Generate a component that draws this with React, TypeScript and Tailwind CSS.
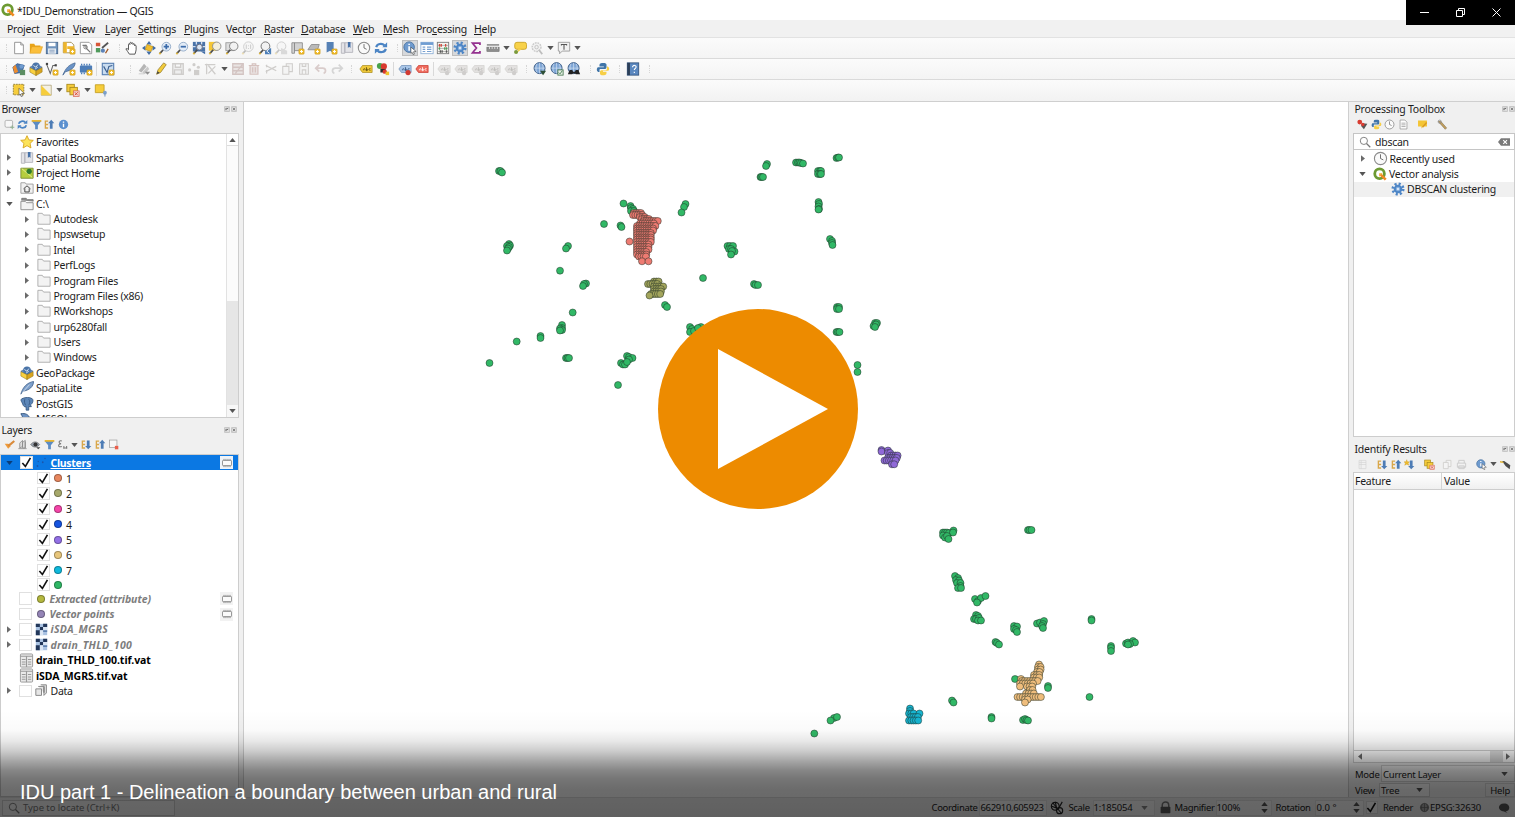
import React from "react";

type Pt = [number, number];

const badge = (
  <g>
    <rect x="9" y="9" width="6" height="6" rx="1" fill="#f0bd2c" stroke="#c9961a" strokeWidth=".6" />
    <path d="M12 10.3v3.4M10.3 12h3.4" stroke="#fff" strokeWidth="1.1" />
  </g>
);
const lens = (
  <g>
    <path d="M2 14.5l4-4.5" stroke="#4d4d4d" strokeWidth="2" />
    <path d="M1.5 15l1.5-1.600" stroke="#e0b63a" strokeWidth="2" />
  </g>
);
const globe = (
  <g>
    <circle cx="7.500" cy="7" r="6.300" fill="#7fa6d6" stroke="#33557f" />
    <path d="M1.500 7h12M7.500 1v12M4.500 2c-1.500 3-1.500 7 0 10M10.500 2c1.500 3 1.500 7 0 10" stroke="#dbe7f5" strokeWidth=".7" fill="none" />
  </g>
);
const gray = "#cfcdcb";
const tag = (fill: string, stroke: string, text: string) => (
  <g>
    <path d="M1 8l3-4h11v8H4z" fill={fill} stroke={stroke} strokeWidth=".8" />
    <path d="M5 9.500c0-2.500 2-2.500 2 0M8.500 6v4M8.500 8.500c2-1 2 1.500 0 1.500M13 7.500c-2-.5-2 2.500 0 2" stroke={text} strokeWidth="1" fill="none" />
  </g>
);

const icons: Record<string, React.ReactNode> = {
  qgis: (
    <g>
      <circle cx="7.500" cy="7.700" r="5.500" fill="none" stroke="#6d9a32" strokeWidth="3.200" />
      <path d="M8.500 8.500l6 6" stroke="#f08a24" strokeWidth="3" />
      <path d="M7 7h4l-4 4z" fill="#f4b13c" />
    </g>
  ),
  file: <path d="M3 1.500h7l3 3v10H3zM10 1.500v3h3" fill="#fff" stroke="#8c8c8c" />,
  open: (
    <g>
      <path d="M1 13V3h5l1 2h6v2" fill="#e8a317" />
      <path d="M3 6.500h12.500L13 14H1z" fill="#fbbf3c" stroke="#dd9b1b" strokeWidth=".6" />
    </g>
  ),
  save: (
    <g>
      <rect x="1.500" y="1.500" width="13" height="13" fill="#6f93bd" stroke="#48688f" />
      <rect x="4" y="2" width="8" height="4" fill="#fff" />
      <rect x="3.500" y="8.500" width="9" height="6" fill="#e9eef4" />
      <path d="M5 10.500h6M5 12.500h6" stroke="#7d98b8" />
    </g>
  ),
  layoutNew: (
    <g>
      <path d="M1.500 1.500h9l3 3v9h-12z" fill="#fff" stroke="#a08a4a" />
      <path d="M1.500 1.500h4v12h-4zM6 6h8v3H6z" fill="#eeb52b" />
      {badge}
    </g>
  ),
  layoutMgr: (
    <g>
      <path d="M1.500 1.500h10l3 3v10h-13z" fill="#fff" stroke="#929292" />
      <path d="M4 5h4v3M13 13L8 8" stroke="#777" strokeWidth="1.400" fill="none" />
      <circle cx="7.500" cy="7" r="2" fill="none" stroke="#777" />
    </g>
  ),
  style: (
    <g>
      <rect x="1" y="2" width="5" height="4" fill="#d8573a" />
      <path d="M8 8l7-6" stroke="#555" strokeWidth="2" />
      <rect x="1" y="8" width="5" height="5" fill="#4f9a5b" />
      <circle cx="9" cy="11" r="2.400" fill="#5d82b8" />
      <path d="M12 14l3-5" stroke="#a05b2a" strokeWidth="1.500" />
    </g>
  ),
  hand: (
    <path d="M5 15c-1-2-3-4-4-6 1-1 2 0 3 1V4c0-1.300 1.500-1.300 1.600 0V2.500c.1-1.300 1.700-1.300 1.800 0V3c.2-1.300 1.800-1.300 1.800 0v1c.2-1.200 1.800-1.200 1.800 0v1.500c.3-1 1.700-1 1.700.3V10c0 2-1 3-1.300 5z" fill="#fff" stroke="#444" strokeWidth="1" />
  ),
  panSel: (
    <g>
      <path d="M8 0l3 4H5zM8 16l3-4H5zM0 8l4-3v6zM16 8l-4-3v6z" fill="#426da5" />
      <rect x="4.500" y="5" width="7" height="6" fill="#f2bf2e" stroke="#b58c17" strokeWidth=".7" transform="rotate(20 8 8)" />
    </g>
  ),
  zoomIn: (
    <g>
      {lens}
      <circle cx="9.500" cy="6.500" r="5" fill="#e3ecf7" stroke="#8fa8c6" />
      <path d="M9.500 3.500v6M6.500 6.500h6" stroke="#3b6baa" strokeWidth="2" />
    </g>
  ),
  zoomOut: (
    <g>
      {lens}
      <circle cx="9.500" cy="6.500" r="5" fill="#e3ecf7" stroke="#8fa8c6" />
      <path d="M6.500 6.500h6" stroke="#3b6baa" strokeWidth="2" />
    </g>
  ),
  zoomFull: (
    <g>
      <rect x="1" y="1" width="14" height="11" fill="#4a73a8" />
      <path d="M5 1v3M11 1v3M1 6.500h3M12 6.500h3" stroke="#d3dff0" strokeWidth="1.500" />
      <path d="M10 12h5v3z" fill="#426da5" />
      {lens}
      <circle cx="8.500" cy="7" r="3.300" fill="#dce7f4" stroke="#667" />
    </g>
  ),
  zoomSel: (
    <g>
      <rect x="1" y="1" width="9" height="10" fill="#f6c734" />
      {lens}
      <circle cx="10" cy="6" r="4.800" fill="#f4efdc" stroke="#888" />
    </g>
  ),
  zoomLayer: (
    <g>
      <rect x="1" y="2" width="9" height="9" fill="#dedede" stroke="#999" />
      {lens}
      <circle cx="10" cy="6" r="4.800" fill="#f2f2f2" stroke="#777" />
    </g>
  ),
  zoomNative: (
    <g opacity=".35">
      {lens}
      <circle cx="8.500" cy="6.500" r="5.500" fill="#f5f5f5" stroke="#777" />
      <path d="M6 4v5M11 4v5M8.500 5v1M8.500 8v1" stroke="#666" />
    </g>
  ),
  zoomLast: (
    <g>
      {lens}
      <circle cx="8.500" cy="6" r="5" fill="#f2f2f2" stroke="#666" />
      <path d="M15 8v7H8l0-3.500z" fill="#4d7fb8" />
      <path d="M13 9l-3 2.500 3 2.500" stroke="#fff" fill="none" />
    </g>
  ),
  zoomNext: (
    <g opacity=".3">
      {lens}
      <circle cx="8.500" cy="6" r="5" fill="#f2f2f2" stroke="#666" />
      <path d="M8 8v7h7V11z" fill="#999" />
    </g>
  ),
  mapNew: (
    <g>
      <path d="M1 2h3v12H1zM4 2h9v9H4z" fill="#d2d2d2" stroke="#8c8c8c" />
      {badge}
    </g>
  ),
  map3d: (
    <g>
      <path d="M1 10l4-6h9l-2 6z" fill="#b9b9b9" stroke="#8d8d8d" />
      {badge}
    </g>
  ),
  bmNew: (
    <g>
      <path d="M3 1h8v13l-4-3-4 2z" fill="#5681b5" />
      {badge}
    </g>
  ),
  bm: (
    <g>
      <path d="M1.500 2h4v12h-4zM5.500 2h9v11h-9z" fill="#e4e4e8" stroke="#b3b3ba" />
      <path d="M9 1h3v7l-1.500-1.500L9 8z" fill="#4671a8" />
    </g>
  ),
  clock: (
    <g>
      <circle cx="8" cy="8" r="6.500" fill="#fafafa" stroke="#8a8a8a" strokeWidth="1.200" />
      <path d="M8 3.500V8l3 1.500" stroke="#666" fill="none" />
    </g>
  ),
  refresh: (
    <g fill="none" stroke="#4b84c4" strokeWidth="2.500">
      <path d="M2.500 7C3.500 3 9 2 12 5M13.500 9c-1 4-6.500 5-9.500 2" />
      <path d="M15 1.500V7H9.500zM1 14.500V9h5.500z" fill="#4b84c4" stroke="none" />
    </g>
  ),
  identify: (
    <g>
      <circle cx="7" cy="7" r="6" fill="#6f9bcf" stroke="#436f9f" />
      <path d="M7 3v1.500M7 6v5" stroke="#fff" strokeWidth="1.800" />
      <path d="M9 7l6 5-3 .3 1 2.700-1.500.5-1-2.500L9 14z" fill="#fff" stroke="#444" strokeWidth=".7" />
    </g>
  ),
  table: (
    <g>
      <rect x="1" y="1.500" width="14" height="13" fill="#fff" stroke="#8fb0d6" />
      <path d="M1 1.500h14v3H1z" fill="#6f9dd2" />
      <path d="M3 7h3M8 7h5M3 9.500h3M8 9.500h5M3 12h3M8 12h5" stroke="#78a0d0" strokeWidth="1.300" />
    </g>
  ),
  abacus: (
    <g>
      <rect x="1.500" y="1.500" width="13" height="13" fill="#f5f5f0" stroke="#777" />
      <path d="M1.500 5h13M1.500 8.500h13M1.500 12h13" stroke="#999" strokeWidth=".8" />
      <path d="M4 3.500v3M6 3.500v3M11 3.500v3" stroke="#d2493c" strokeWidth="1.500" />
      <path d="M4 7v3M10 7v3M12 7v3" stroke="#4d9a58" strokeWidth="1.500" />
      <path d="M5 10.500v3M7 10.500v3M12 10.500v3" stroke="#555" strokeWidth="1.500" />
    </g>
  ),
  gear: (
    <g>
      <circle cx="8" cy="8" r="6" fill="none" stroke="#4e86c6" strokeWidth="3" strokeDasharray="2.400 2.312" />
      <circle cx="8" cy="8" r="3.700" fill="#8bb3e0" stroke="#4e86c6" strokeWidth="2.400" />
      <circle cx="8" cy="8" r="1.200" fill="#e9f1fa" />
    </g>
  ),
  sigma: <path d="M12.500 4.500V2.500H4L8.500 8 4 13.500h8.500v-2" fill="none" stroke="#94318f" strokeWidth="2" />,
  ruler: (
    <g>
      <path d="M1 4.500h14" stroke="#555" strokeWidth="1.200" />
      <rect x="1" y="7" width="14" height="5" fill="#8d8d8d" stroke="#666" strokeWidth=".6" />
      <path d="M4 7v2M7 7v2M10 7v2M13 7v2" stroke="#eee" />
    </g>
  ),
  tip: (
    <g>
      <rect x="2" y="1.500" width="13.500" height="8" rx="2.500" fill="#f8d24a" stroke="#c9a224" />
      <path d="M6 9l-1 4 5-4z" fill="#f8d24a" />
      <circle cx="3.500" cy="12.500" r="2.300" fill="#7b9a3a" />
    </g>
  ),
  locGray: (
    <g opacity=".5">
      <circle cx="7.500" cy="7" r="5" fill="#ececec" stroke="#9a9a9a" strokeDasharray="2 1" strokeWidth="1.600" />
      <circle cx="7.500" cy="7" r="2" fill="none" stroke="#888" />
      <path d="M10 10l4 5" stroke="#888" strokeWidth="2" />
    </g>
  ),
  textAnn: (
    <g>
      <path d="M1.500 1.500h13v10H6l-3 3v-3H1.500z" fill="#f2f2f2" stroke="#999" />
      <path d="M5 5V4h6v1M8 4v6" stroke="#555" strokeWidth="1.200" fill="none" />
    </g>
  ),
  dsm: (
    <g>
      <path d="M1 6l5-4 8 2-3 8-8 1z" fill="#4f79ae" stroke="#35588a" />
      <path d="M1 6l3-3 3 8-4 2z" fill="#ec8b2d" />
      <circle cx="11" cy="5" r="2.500" fill="#6f9bcf" />
      <rect x="9" y="9" width="6" height="6" fill="#5b8d62" />
    </g>
  ),
  gpkg: (
    <g>
      <path d="M1 6l7-4 7 4-7 4z" fill="#6c95c9" stroke="#3f5f87" strokeWidth=".7" />
      <circle cx="8" cy="5" r="4.300" fill="#4a74a8" />
      <path d="M5 4l3 2 2-3M7 8l3-2" stroke="#dfeaf7" fill="none" />
      <path d="M1 6.500l7 3.500v5.500l-7-4z" fill="#f9d03f" stroke="#8d7316" strokeWidth=".6" />
      <path d="M15 6.500L8 10v5.500l7-4z" fill="#d9a51f" stroke="#8d7316" strokeWidth=".6" />
    </g>
  ),
  vNew: (
    <g>
      <path d="M2 3l4 10 3-9h3" fill="none" stroke="#666" strokeWidth="1.200" />
      <rect x="1" y="1" width="2.500" height="2.500" fill="#444" />
      <rect x="11" y="2.500" width="2.500" height="2.500" fill="#444" />
      {badge}
    </g>
  ),
  featherNew: (
    <g>
      <path d="M1 15C4 7 8 3 15 1c0 5-5 9-11 10z" fill="#6a93c6" stroke="#3c5f8c" strokeWidth=".8" />
      {badge}
    </g>
  ),
  feather: (
    <g>
      <path d="M1 15C3 7 8 2 15.500 .5c0 6-5 10-11.500 11z" fill="#7d9fca" stroke="#3f5e88" strokeWidth=".9" />
      <path d="M2 14L11 4" stroke="#e4ecf6" strokeWidth=".8" />
    </g>
  ),
  memNew: (
    <g>
      <rect x="1" y="4" width="14" height="8" rx="1" fill="#4d7db8" />
      <path d="M3 2v2M6 2v2M9 2v2M12 2v2M3 12v2M6 12v2" stroke="#4d7db8" strokeWidth="1.500" />
      {badge}
    </g>
  ),
  virt: (
    <g>
      <rect x="1.500" y="1.500" width="13" height="13" fill="#c9dcf0" stroke="#5a82b4" strokeWidth="1.300" />
      <path d="M3 5l4 7 2-7 4-1" fill="none" stroke="#3b5f90" strokeWidth="1.300" />
      {badge}
    </g>
  ),
  editsGray: (
    <g>
      <path d="M2 10l6-8 3 3-6 7z" fill="#b5b5b5" />
      <path d="M6 12l6-7 2 3-5 6z" fill="#c9c9c9" />
      <path d="M2 13.500h6" stroke="#c9c9c9" />
      <path d="M9 11h6l-3 3.500z" fill="#8e8e8e" />
    </g>
  ),
  pencil: (
    <g>
      <path d="M3 14l1.500-5L11 1l3 2-6.500 9z" fill="#f2cb3c" stroke="#8f7522" strokeWidth=".8" />
      <path d="M3 14l1-3.500 2.500 1.700z" fill="#444" />
    </g>
  ),
  saveGray: <path d="M2 2h12v12H2zM5 2v4h6V2M4 14V9h8v5" fill="#eee" stroke={gray} strokeWidth="1.500" />,
  ptsGray: (
    <g fill={gray}>
      <circle cx="3" cy="9" r="1.800" /><circle cx="8" cy="3" r="1.800" /><circle cx="13" cy="6" r="1.800" />
      <rect x="8" y="9" width="6" height="6" />
    </g>
  ),
  vertGray: <path d="M1 3h12M3 2v12M5 4l8 10M13 5l-8 8" fill="none" stroke={gray} strokeWidth="1.500" />,
  multiGray: <path d="M2 2h12v12H2zM2 6h12M2 10h12M5 13L13 3" fill="#e9e4e3" stroke="#d3c4c2" strokeWidth="1.500" />,
  trash: <path d="M2 4h12M6 4V2h4v2M3.500 4v10h9V4M6.500 6v6M9.500 6v6" fill="#e9e2e1" stroke="#d6c2bf" strokeWidth="1.400" />,
  cut: <path d="M2 4l12 6M2 11l12-6M3 3v3M3 9v4" fill="none" stroke={gray} strokeWidth="1.400" />,
  copy: <path d="M2 5h7v9H2zM6 5V2h7v9H9" fill="#f4f4f4" stroke={gray} strokeWidth="1.200" />,
  paste: <path d="M3 2h10v12H3zM6 2v3h4V2M6 9h4v5H6z" fill="#f4f4f4" stroke={gray} strokeWidth="1.200" />,
  undo: <path d="M6 3L2 7l4 4M2 7h8c4 0 4 5 1 6" fill="none" stroke="#d9cccb" strokeWidth="2" />,
  redo: <path d="M10 3l4 4-4 4M14 7H6c-4 0-4 5-1 6" fill="none" stroke="#d5d5d5" strokeWidth="2" />,
  abc: tag("#f0c93a", "#a88a1c", "#5c4a08"),
  diag: (
    <g>
      <path d="M6 6l7 7" stroke="#333" strokeWidth="1.500" />
      <circle cx="4.500" cy="4.500" r="3.500" fill="#4aa24b" />
      <circle cx="9" cy="5" r="3.500" fill="#d8392f" />
      <rect x="5" y="8" width="6" height="4" fill="#2d2d2d" />
      <circle cx="10" cy="11" r="2.500" fill="#d8392f" />
      <rect x="11" y="11" width="4" height="4" fill="#f0c22e" />
    </g>
  ),
  abcBlue: (
    <g>
      {tag("#a9c6e8", "#6c8cb4", "#30507c")}
      <circle cx="11.500" cy="12" r="3" fill="#d23b33" />
    </g>
  ),
  abcRed: tag("#ef6a5c", "#c5372c", "#fff"),
  tagGray: (
    <g opacity=".75">
      {tag("#dcdad8", "#c6c4c2", "#a8a6a4")}
      <circle cx="11.500" cy="12.500" r="2.500" fill="#c2c0be" />
    </g>
  ),
  globeA: (<g>{globe}<path d="M8 10h7l-3.500 5z" fill="#2e4f36" /></g>),
  globeB: (<g>{globe}<rect x="9" y="9" width="6" height="6" fill="#e8efe8" stroke="#4a7a52" /><path d="M10 12l1.500 1.500L14 10" stroke="#3c7a46" fill="none" /></g>),
  globeC: (<g>{globe}<path d="M1 14l2-5h3l1 2h2l1-2h3l2 5h-5l-.5-1h-3L6 14z" fill="#222" /></g>),
  python: (
    <g>
      <path d="M8 1c-4 0-4 1-4 4h5v1H2C0 8 1 12 4 11.500V9c0-1 1-1 2-1h4c1 0 2-.5 2-2V3c0-1.500-1-2-4-2z" fill="#3f74a8" />
      <path d="M8 15c4 0 4-1 4-4H8v-1h6c2-2 1-5-1.500-5v2c0 2-1 2.500-2.500 2.500H7c-1.500 0-2.500.5-2.500 2V13c0 1.500 1 2 3.500 2z" fill="#f7cf45" />
    </g>
  ),
  help: (
    <g>
      <rect x="1.500" y="1" width="13" height="14" fill="#5a87bf" stroke="#35557f" />
      <rect x="1.500" y="1" width="3" height="14" fill="#2c3e57" />
      <path d="M7.500 6c0-3 4.500-2.500 4 0-.3 1.500-2 1.300-2 3M9.500 11v1.500" stroke="#fff" fill="none" strokeWidth="1.300" />
    </g>
  ),
  selRect: (
    <g>
      <rect x="1.500" y="1.500" width="12" height="12" fill="#f6cd3c" stroke="#8c7a3a" strokeDasharray="2 1" />
      <path d="M8 6l6 6-3 0 1 3-1.500.5-1-3L8 14z" fill="#fff" stroke="#444" strokeWidth=".7" />
    </g>
  ),
  selExpr: (
    <g>
      <path d="M2.500 2.500h11.500v11.500h-11.500z" fill="#f4f1e6" stroke="#a89b6c" strokeWidth=".8" />
      <path d="M2.500 2.500l11.500 11.500h-11.500z" fill="#f6cd3c" />
    </g>
  ),
  desel: (
    <g>
      <rect x="1" y="1.500" width="8.500" height="8.500" fill="#f6cd3c" stroke="#a98a1e" />
      <rect x="4.500" y="5" width="8.500" height="8.500" fill="#f6cd3c" stroke="#a98a1e" />
      <rect x="8.500" y="9" width="6.500" height="6.500" fill="#f4d6d1" stroke="#d9624f" strokeWidth=".8" />
      <path d="M10 10.500l3.500 3.500M13.500 10.500L10 14" stroke="#d9432f" />
    </g>
  ),
  selLoc: (
    <g>
      <path d="M1.500 2h10v9h-10z" fill="#f6cd3c" stroke="#c59f22" />
      <circle cx="12.500" cy="11" r="2.200" fill="#7ea2cd" />
      <path d="M12.500 12v3.500" stroke="#5c84b5" />
    </g>
  ),
  addLayer: (<g><rect x="1.500" y="2" width="11" height="10" rx="2" fill="#f7f7f7" stroke="#999" /><path d="M12 9v6M9 12h6" stroke="#8fae8f" strokeWidth="1.500" /></g>),
  filter: (<g><path d="M1 3h14l-5 6v6H6V9z" fill="#5b8bc4" /><path d="M1 1.500h14v2.500H1z" fill="#eab52d" /></g>),
  collapse: (<g><path d="M2 2v12M2 3h4M2 8h4M2 13h4" stroke="#d9a74a" strokeWidth="2" fill="none" /><path d="M10.500 1l4.500 5h-2.500v8h-4V6H6z" fill="#4d7cb5" /></g>),
  expand: (<g><path d="M2 2v12M2 3h4M2 8h4M2 13h4" stroke="#d9a74a" strokeWidth="2" fill="none" /><path d="M10.500 15L15 10h-2.500V2h-4v8H6z" fill="#4d7cb5" /></g>),
  expandNew: (<g><path d="M4 1l1 3 3 0-2 2 1 3-3-1.500L1 9l1-3-2-2h3z" fill="#f1bd2c" stroke="#c79517" strokeWidth=".5" /><path d="M10.500 15L15 10h-2.500V2h-4v8H6z" fill="#4d7cb5" /></g>),
  info: (<g><circle cx="8" cy="8" r="6.800" fill="#5b90cf" /><path d="M8 3.500v2M8 7v5" stroke="#fff" strokeWidth="2" /></g>),
  brush: (<g><path d="M1 7l5 0 4 3-4 4z" fill="#ef9b3a" /><path d="M6 10l4-3 5-4" stroke="#d98a3a" strokeWidth="3" /></g>),
  group: <path d="M4 13V6l4-4v9zM8 13V5l4-3v11zM2 14h12M12 4v9" fill="#ddd" stroke="#8b8b8b" strokeWidth="1.200" />,
  eye: (<g><path d="M1 8c4-5 9-5 13 0-4 5-9 5-13 0z" fill="#9aa4b0" stroke="#666" /><circle cx="8" cy="8" r="3" fill="#333" /><path d="M9 12h6l-3 3z" fill="#444" /></g>),
  eps: <path d="M7 3C2 1 2 7 6 7 1 7 1 13 7 11M10 10v4M14 10v4M9 13h6" fill="none" stroke="#777" strokeWidth="1.500" />,
  remove: (<g><rect x="2" y="1.500" width="11" height="11" fill="#f7f7f7" stroke="#999" /><rect x="10" y="10" width="5" height="5" fill="#ea5f4c" /></g>),
  star: <path d="M8 .8l2.200 4.800 5 .5-3.700 3.500 1 5.200L8 12.200l-4.500 2.600 1-5.200L.8 6.100l5-.5z" fill="#fce35a" stroke="#d7a21c" />,
  projHome: (<g><path d="M1 2.500h14v11.500H1z" fill="#b6ce3e" stroke="#7a8d33" /><path d="M2 3l12 10" stroke="#e6f0a0" /><circle cx="10.500" cy="6" r="3" fill="#2c7a2e" /></g>),
  home: (<g><path d="M1 2h5l1 1.500h8V14H1z" fill="#f1f1f1" stroke="#999" /><path d="M4 9l4-3.500L12 9M5.500 8.500V12.500h5V8.500" fill="none" stroke="#444" strokeWidth="1.100" /></g>),
  drive: (<g><path d="M2 4V1.500h5L8.500 3H15v2" fill="#8a8a8a" stroke="#777" /><path d="M1 5h5l1.500 1.500H15V14.500H1z" fill="#f3f3f3" stroke="#888" /></g>),
  folder: <path d="M1 1.500h5l1.500 2H15V14H1z" fill="#f3f3f3" stroke="#a0a0a0" strokeWidth=".9" />,
  pg: (
    <g>
      <path d="M2 2c4-2 9-2 12 0 2 2 0 6-2 7l1 2-3 0v4H7v-4c-1 1-3 0-4-3S0 4 2 2z" fill="#5c86b8" stroke="#2f5078" strokeWidth=".9" />
      <path d="M5.500 2.500c-1 3 0 5 1 7M10 2.500c2 2 1 5 0 7" stroke="#2f5078" strokeWidth=".8" fill="none" />
    </g>
  ),
  mssql: <path d="M1 2c5-1 9 1 10 5l3 8H3c2-4 1-8-2-13z" fill="#6d93c4" stroke="#2f5078" />,
  pts: (<g fill="#1c56ac"><circle cx="2" cy="12" r="1.200" /><circle cx="3" cy="6" r="1" /><circle cx="9" cy="7" r="1.200" /><circle cx="12" cy="2" r="1" /></g>),
  mem: (<g><rect x="2" y="4.500" width="12" height="7" rx="1" fill="#fafafa" stroke="#777" /><path d="M4 2.500v2M6.600 2.500v2M9.300 2.500v2M12 2.500v2M4 11.500v2M6.600 11.500v2M9.300 11.500v2M12 11.500v2" stroke="#777" /></g>),
  raster: (<g><rect x="1" y="1" width="14" height="14" fill="#a9c2e2" /><path d="M1 1h5v4H1zM6 5h4v4H6zM10 1h5v4h-5zM1 9h5v6H1z" fill="#22375a" /><path d="M6 9h4v6H6zM10 5h5v4h-5z" fill="#dbe6f4" /><path d="M10 9h5v2h-5z" fill="#5a7dad" /></g>),
  tbl: (<g><rect x="1.500" y="1" width="13" height="14" rx="1" fill="#e9e9e9" stroke="#999" /><path d="M1.500 3.500h13M8 4v11" stroke="#999" strokeWidth="1.200" /><path d="M3 7h4M9.500 7H13M3 9.500h4M9.500 9.500H13M3 12h4M9.500 12H13" stroke="#999" strokeWidth="1.100" /></g>),
  dataGrp: <path d="M1 6h7v8H1zM4 3h7v8M7 1h7v10l-3 3V4M11 2v8" fill="#e6e6e6" stroke="#888" strokeWidth="1.200" />,
  search: (<g fill="none" stroke="#777"><circle cx="6.500" cy="6.500" r="4.800" strokeWidth="1.200" /><path d="M10 10l5 5" strokeWidth="1.700" /></g>),
  clear: (<g><path d="M0 8l4-5h12v10H4z" fill="#7a7a7a" /><path d="M7 5.500l5 5M12 5.500l-5 5" stroke="#fff" strokeWidth="1.500" /></g>),
  model: (<g><path d="M7 6l8 1-5 8-4-5z" fill="#555" /><circle cx="4" cy="4.500" r="3.500" fill="#d83c31" /><circle cx="8.500" cy="8" r="2.500" fill="#d83c31" /></g>),
  doc: <path d="M3 1.500h7l3 3v10H3zM5 6h6M5 8.500h6M5 11h6" fill="#fff" stroke="#8c8c8c" />,
  editTool: (<g><path d="M1.500 2h13v9h-6l-2 3v-3h-5z" fill="#f4c535" /><path d="M8 12l6-7" stroke="#d99b23" strokeWidth="2" /></g>),
  wrench: (<g><path d="M2 3l4 1 8 9-2 2-8-9z" fill="#c3a05c" stroke="#7b684a" strokeWidth=".8" /><circle cx="4" cy="4" r="2.400" fill="none" stroke="#888" /></g>),
  wrenchDk: (<g><path d="M3 3l3 0 9 6-1 6-6-5z" fill="#4b4b4b" /><path d="M0 4l5 1" stroke="#e3b431" strokeWidth="2" /></g>),
  tipGray: <path d="M3 2h10v12H3zM3 5h10M3 8h10M6 2v12" fill="#f1f1f1" stroke="#d5d5d5" />,
  print: <path d="M2 6h12v6H2zM4 6V2h8v4M4 10h8v4H4z" fill="#f1f1f1" stroke="#c9c9c9" strokeWidth="1.300" />,
  lock: (<g><path d="M4 8V5c0-5 8-5 8 0v3" fill="none" stroke="#777" strokeWidth="1.800" /><rect x="2" y="7" width="12" height="8" rx="1" fill="#5a5a5a" /></g>),
  extents: (<g fill="none" stroke="#222" strokeWidth="1.300"><circle cx="6" cy="6" r="4.500" /><circle cx="11" cy="11" r="3.500" /><path d="M3 2l10 12M6 1l2 9M14 1l-5 9M2 6l8 3" /></g>),
  bubble: <path d="M8 2c9 0 9 10 2 10.500L13 15l-5-2.500C-1 12-1 2 8 2z" fill="#555" />,
  globeGray: (<g fill="none" stroke="#666"><circle cx="8" cy="8" r="6" fill="#aaa" /><path d="M2 8h12M8 2v12M5 3c-2 3-2 7 0 10M11 3c2 3 2 7 0 10" /></g>),
};

const I = ({ n, c = "size-[14px]" }: { n: string; c?: string }) => (
  <svg viewBox="0 0 16 16" className={`${c} shrink-0`}>{icons[n]}</svg>
);

const Down = ({ c = "text-[#555]" }: { c?: string }) => (
  <svg viewBox="0 0 8 5" className={`h-[4px] w-[7px] shrink-0 ${c}`}><path d="M0 0h8L4 5z" fill="currentColor" /></svg>
);
const Right = () => (
  <svg viewBox="0 0 5 8" className="h-[7px] w-[4px] shrink-0 text-[#6a6a6a]"><path d="M0 0v8l5-4z" fill="currentColor" /></svg>
);

/* "v" draws a drop-down arrow, "|" a separator, ":" a drag handle, "*" marks a pressed button. */
const Group = ({ items, c, cell = "w-[16.6px]", size }: { items: string; c: string; cell?: string; size?: string }) => (
  <div className={`flex h-full shrink-0 items-center ${c}`}>
    {items.split(" ").map((n, i) => {
      if (n === "v") return <span key={i} className="flex w-[10.500px] justify-center"><Down /></span>;
      if (n === "|") return <span key={i} className="mx-[2.500px] h-[14px] w-px bg-[#d9d9d9]" />;
      if (n === ":") return <span key={i} className="h-[8px] w-[2px] border-l border-dotted border-[#d6d6d6]" />;
      const on = n.endsWith("*");
      return (
        <span key={i} className={`flex h-[16px] shrink-0 items-center justify-center ${cell} ${on ? "border border-[#bdbdbd] bg-[#d6d8db]" : ""}`}>
          <I n={on ? n.slice(0, -1) : n} c={size} />
        </span>
      );
    })}
  </div>
);

const menus: [string, string, string, string][] = [
  ["Pro", "j", "ect", "w-[40px]"], ["", "E", "dit", "w-[26px]"], ["", "V", "iew", "w-[32px]"], ["", "L", "ayer", "w-[33px]"],
  ["", "S", "ettings", "w-[46px]"], ["", "P", "lugins", "w-[42px]"], ["Vect", "o", "r", "w-[38px]"], ["", "R", "aster", "w-[37px]"],
  ["", "D", "atabase", "w-[52px]"], ["", "W", "eb", "w-[30px]"], ["", "M", "esh", "w-[33px]"], ["Pro", "c", "essing", "w-[58px]"], ["", "H", "elp", "w-[30px]"],
];

const browser: [number, string, string, string][] = [
  [0, "", "star", "Favorites"], [0, "r", "bm", "Spatial Bookmarks"], [0, "r", "projHome", "Project Home"], [0, "r", "home", "Home"],
  [0, "d", "drive", "C:\\"], [1, "r", "folder", "Autodesk"], [1, "r", "folder", "hpswsetup"], [1, "r", "folder", "Intel"],
  [1, "r", "folder", "PerfLogs"], [1, "r", "folder", "Program Files"], [1, "r", "folder", "Program Files (x86)"],
  [1, "r", "folder", "RWorkshops"], [1, "r", "folder", "urp6280fall"], [1, "r", "folder", "Users"], [1, "r", "folder", "Windows"],
  [0, "", "gpkg", "GeoPackage"], [0, "", "feather", "SpatiaLite"], [0, "", "pg", "PostGIS"], [0, "", "mssql", "MSSQL"],
];

const classes: [string, string][] = [
  ["1", "bg-[#e8875f]"], ["2", "bg-[#a6a86a]"], ["3", "bg-[#f545a9]"], ["4", "bg-[#1553e0]"],
  ["5", "bg-[#9370e6]"], ["6", "bg-[#e8c67c]"], ["7", "bg-[#0fb9dc]"], ["", "bg-[#2fb765]"],
];

const Check = ({ on }: { on?: boolean }) => (
  <span className="flex size-[12.500px] shrink-0 items-center justify-center border border-[#e0e0e0] bg-white">
    {on && <svg viewBox="0 0 12 12" className="size-[11px] shrink-0"><path d="M1.500 6.500L4.800 10.300 10.300 1" fill="none" stroke="#111" strokeWidth="1.800" /></svg>}
  </span>
);
const Dot = ({ c }: { c: string }) => <span className={`size-[8px] shrink-0 rounded-full border border-black/30 ${c}`} />;

const DockTitle = ({ t, c = "" }: { t: string; c?: string }) => (
  <div className={`flex h-[15px] items-center justify-between pl-[1.500px] ${c}`}>
    <span>{t}</span>
    <span className="flex gap-px pb-[2px]">
      {[0, 1].map((k) => (
        <svg key={k} viewBox="0 0 10 10" className="size-[6px]">
          <rect x=".5" y=".5" width="9" height="9" rx="2" fill="#ddd" stroke="#aaa" />
          <path d={k ? "M3 3l4 4M7 3l-4 4" : "M3 7V4h4M4 6l3-3"} stroke="#666" strokeWidth="1.200" fill="none" />
        </svg>
      ))}
    </span>
  </div>
);

/* Points of the DBSCAN result, in canvas coordinates of the map view. */
const green: Pt[] = [
  [499, 171], [500.5, 171], [502, 172.5], [767, 164], [766, 166], [760.5, 177], [761.5, 177], [763, 177], [796, 162.500], [798, 162.500], [799.5, 162.5], [801, 163], [803, 163.5],
  [836.5, 158], [838, 157.5], [839, 157.500], [818, 171], [820, 171], [821, 171], [818, 174], [820, 174], [821, 174], [623.500, 203.500], [630.5, 206], [631, 208], [633, 209], [631, 211], [634, 211],
  [604, 224], [620.5, 225.5], [621.5, 227], [685.5, 204], [684, 207], [681.500, 212.500], [818.5, 202], [819, 204], [818.5, 206.5], [819, 209], [818.5, 209.5],
  [509, 244], [510, 245.5], [507, 246], [509, 247], [508, 248.5], [507, 250.5], [568, 246], [566, 248.500], [560, 270.700], [586, 283.5], [584, 284], [583, 286], [572.700, 312.500],
  [830, 239], [832, 241], [832, 243], [832.5, 245], [727.5, 246], [730, 246], [733, 246], [729, 249], [731, 249], [734.5, 251.5], [732, 251], [731, 254.5],
  [703, 278], [754, 284], [755.5, 285], [758, 285], [665, 305], [667, 307], [837, 307], [839, 307], [837, 309], [839, 309], [836.5, 332], [838, 332], [839.5, 332],
  [875, 323], [877, 323], [873.5, 326], [876, 324.5], [875, 327], [562, 325], [562, 328], [560, 328.5], [562, 330], [560, 330.5], [540.500, 336], [540.500, 338],
  [516.700, 341.500], [489.500, 363], [566, 358], [567.5, 358], [569, 358], [627, 356], [629, 357], [632.5, 358], [629, 359.5], [621, 363], [623, 364.5], [625, 364.5], [627, 362],
  [618, 385], [690, 327], [692, 329], [690, 332], [694, 331], [701, 327], [698, 328], [857.500, 365], [857.500, 372],
  [943, 532.500], [945, 532.500], [947, 532.500], [949, 533], [953.500, 530.500], [953, 532.5], [943, 535.5], [945, 537.5], [947, 536], [948.5, 539], [1028, 530], [1029.5, 530], [1031.5, 530],
  [955, 576], [958, 578], [956, 580], [959, 580.5], [957, 583], [960.5, 583], [960.5, 586], [958, 588], [961, 588], [975, 599], [978, 601], [981, 598], [985.500, 596], [977, 602.5],
  [976, 615], [978, 616], [974, 619], [976, 619], [979, 618], [978, 620.500], [981, 620.500], [1014, 626], [1017, 626.5], [1014, 629], [1016, 630], [1017, 632],
  [1037, 623.5], [1040, 622.5], [1044, 621], [1043, 624], [1042, 626], [1043, 628], [1091.500, 619], [1091.500, 620.500], [995.5, 642], [997, 643], [999, 644.5],
  [1111, 646], [1111, 648], [1111, 651], [1126, 643.5], [1128, 642.5], [1133, 641], [1135, 642.500], [1130, 644], [1128, 644.5], [1015, 679], [1048, 686], [1048, 688],
  [1089.500, 697], [952, 700.5], [953.5, 702.500], [991.500, 717], [991.500, 718.500], [1023, 720], [1025, 719], [1026.5, 720], [1028, 720.5], [834, 718], [837, 717], [830.5, 720.500], [814.300, 733.500],
];

const fill = (rows: [number, number, number][], step: number): Pt[] => {
  const out: Pt[] = [];
  rows.forEach(([y, a, b]) => { for (let x = a; x <= b; x += step) out.push([x, y]); });
  return out;
};
const clusters: [string, Pt[]][] = [
  ["#31b866", green],
  ["#ee7b72", fill([[213, 634, 642], [215, 633, 643], [217, 640, 646], [219, 642, 650], [221, 644, 658], [223.5, 640, 656], [226, 637, 656], [228.5, 637, 655],
    [230.5, 637, 655], [233, 637, 653], [235, 637, 653], [237.500, 637, 652], [239.5, 637, 652], [242, 637, 651], [244.5, 637, 650], [247, 637, 650],
    [249.5, 637, 649], [252, 637, 648], [254.5, 637, 648], [256.5, 639, 647], [261.3, 642, 642.5], [261.3, 648.500, 649], [241.500, 629.500, 630]], 2.3)],
  ["#a3a55c", fill([[281.500, 654, 659], [284, 648, 659], [286.500, 654, 665], [289, 654, 662], [291.500, 654, 662], [294, 651, 661], [295.500, 649.5, 651]], 2.3)],
  ["#9069d8", fill([[450, 881.5, 882], [451.5, 881.5, 882], [450.5, 888, 889], [453, 888, 891], [455.500, 891, 899], [458, 888, 897], [460.500, 884.5, 897], [464.3, 892, 895]], 2.2)],
  ["#efbd7c", fill([[664.5, 1039, 1039], [667, 1038, 1041], [669.5, 1038, 1041], [672, 1037, 1041], [675, 1034, 1040], [677.5, 1034, 1040], [679, 1021, 1023], [681, 1022, 1040],
    [683.5, 1020, 1034], [686.5, 1020, 1022], [686.5, 1027, 1034], [690, 1030, 1034], [693.500, 1026, 1034], [697, 1017.5, 1043], [699.500, 1025, 1030], [702.5, 1025, 1027]], 2.6)],
  ["#16b4d0", fill([[708.500, 910, 911], [711, 910, 912], [713.500, 909, 915], [713.5, 919.5, 920], [717, 911, 918], [720.500, 909, 919]], 2.3)],
];

const MapView = () => (
  <svg viewBox="244 102 1104 695" className="h-[695px] w-[1104px]">
    {clusters.map(([color, pts]) => (
      <g key={color} fill={color} stroke="#1c2a22" strokeOpacity=".6" strokeWidth=".8">
        {pts.map(([x, y], i) => <circle key={i} cx={x} cy={y} r="3.500" />)}
      </g>
    ))}
  </svg>
);

const Spin = () => (
  <span className="ml-auto flex flex-col gap-[3px] pr-[3px]">
    <Down c="rotate-180 text-[#555]" />
    <Down />
  </span>
);

export default function App() {
  return (
    <div className="relative flex h-[817px] w-[1515px] flex-col overflow-hidden bg-[#f0f0f0] font-['Noto_Sans',sans-serif] text-[10.500px] leading-[15px] tracking-[-0.25px] whitespace-nowrap text-[#1c1c1c]">
      <header className="flex h-[20px] shrink-0 items-center bg-white pl-px">
        <I n="qgis" />
        <span className="ml-[2px] pt-[2px] tracking-[-0.350px]">*IDU_Demonstration — QGIS</span>
      </header>
      <nav className="flex h-[18px] shrink-0 items-center border-b border-[#e2e2e2] bg-[#f1f1f1] pt-[2px] pl-[7px]">
        {menus.map(([a, u, b, w]) => (
          <span key={u + b} className={`${w} shrink-0`}>{a}<u className="underline-offset-1">{u}</u>{b}</span>
        ))}
      </nav>
      <div className="flex h-[21px] shrink-0 items-center border-b border-[#dadada] bg-linear-to-b from-[#fbfbfb] to-[#f4f4f4] pb-px">
        <Group c="ml-[6px]" items=":" />
        <Group c="ml-[3px]" items="file open save layoutNew layoutMgr style" />
        <Group c="ml-[8px]" items=":" />
        <Group c="ml-[3.500px]" cell="w-[16.550px]" items="hand panSel zoomIn zoomOut zoomFull zoomSel zoomLayer zoomNative zoomLast zoomNext mapNew map3d bmNew bm clock refresh" />
        <Group c="ml-[8px]" items=":" />
        <Group c="ml-[3px]" items="identify* table abacus gear* sigma ruler v tip locGray v textAnn v" />
      </div>
      <div className="flex h-[21px] shrink-0 items-center border-b border-[#dadada] bg-linear-to-b from-[#fbfbfb] to-[#f4f4f4] pb-px">
        <Group c="ml-[6px]" items=":" />
        <Group c="ml-[3px]" items="dsm gpkg vNew featherNew memNew | virt" />
        <Group c="ml-[13px]" items=":" />
        <Group c="ml-[4.500px]" items="editsGray pencil saveGray ptsGray vertGray v multiGray trash cut copy paste undo redo" />
        <Group c="ml-[5px]" items=":" />
        <Group c="ml-[5px]" items="abc diag | abcBlue abcRed | tagGray tagGray tagGray tagGray tagGray" />
        <Group c="ml-[7px]" items=":" />
        <Group c="ml-[4px]" items="globeA globeB globeC" />
        <Group c="ml-[8px]" items=":" />
        <Group c="ml-[3px]" items="python" />
        <Group c="ml-[8px]" items=":" />
        <Group c="ml-[3px]" items="help" />
        <Group c="ml-[8px]" items=":" />
      </div>
      <div className="flex h-[22px] shrink-0 items-center border-b border-[#cfcfcf] bg-linear-to-b from-[#fbfbfb] to-[#f2f2f2] pb-px">
        <Group c="ml-[6px]" items=":" />
        <Group c="ml-[3px]" items="selRect v selExpr v desel v selLoc" />
      </div>

      <div className="flex h-[695px] shrink-0">
        <aside className="flex w-[239px] shrink-0 flex-col">
          <DockTitle t="Browser" c="pr-[2px]" />
          <div className="flex h-[16px] items-center pb-[2px]">
            <Group c="ml-[2.500px]" cell="w-[13.500px]" size="size-[11px]" items="addLayer refresh filter collapse info" />
          </div>
          <div className="flex h-[285px] overflow-hidden border border-[#cdcdcd] bg-white">
            <div className="flex-1 pt-[.5px]">
              {browser.map(([d, a, ic, t]) => (
                <div key={t} className="flex h-[15.380px] items-center">
                  <span className={`flex w-[12px] shrink-0 justify-center ${d ? "ml-[20px]" : "ml-[2px]"}`}>
                    {a === "r" && <Right />}{a === "d" && <Down />}
                  </span>
                  <span className={`${d ? "ml-[4px]" : "ml-[5px]"}`}><I n={ic} /></span>
                  <span className={`pt-px ${d ? "ml-[2.500px]" : "ml-[2px]"}`}>{t}</span>
                </div>
              ))}
            </div>
            <div className="flex w-[12px] flex-col items-center border-l border-[#e2e2e2] bg-[#e6e6e6]">
              <span className="flex h-[12px] w-full items-center justify-center border-b border-[#ddd] bg-white"><Down c="rotate-180 text-[#555]" /></span>
              <span className="h-[155px] w-full bg-[#fbfbfb]" />
              <span className="mt-auto flex h-[12px] w-full items-center justify-center bg-[#f7f7f7]"><Down /></span>
            </div>
          </div>
          <DockTitle t="Layers" c="mt-[5px] pr-[2px]" />
          <div className="flex h-[16px] items-center pb-[3px]">
            <Group c="ml-[2.500px]" cell="w-[13.400px]" size="size-[11px]" items="brush group eye filter eps v expand collapse remove" />
          </div>
          <div className="flex-1 border border-[#cdcdcd] bg-white">
            <div className="flex h-[15.400px] items-center bg-[#0b78e3] pr-[5px]">
              <span className="ml-[5px]"><Down c="text-[#0c3d78]" /></span>
              <span className="ml-[7px]"><Check on /></span>
              <span className="ml-[3px]"><I n="pts" c="size-[12px]" /></span>
              <span className="ml-[3px] pt-px font-bold tracking-[-0.3px] text-white underline">Clusters</span>
              <span className="ml-auto flex size-[13px] items-center justify-center bg-[#eef3f8]"><I n="mem" c="size-[12px]" /></span>
            </div>
            {classes.map(([t, c]) => (
              <div key={c} className={`flex items-center pl-[36px] ${t ? "h-[15.380px]" : "h-[13px]"}`}>
                <Check on />
                <span className="ml-[4px] flex"><Dot c={c} /></span>
                <span className="ml-[4.500px] pt-[2px]">{t}</span>
              </div>
            ))}
            {[["bg-[#b4b83f]", "Extracted (attribute)"], ["bg-[#9484b6]", "Vector points"]].map(([c, t]) => (
              <div key={t} className="flex h-[15.380px] items-center pr-[5px] pl-[18px]">
                <Check />
                <span className="ml-[5px] flex"><Dot c={c} /></span>
                <span className="ml-[5px] pt-px font-bold tracking-[-0.050px] text-[#7d7d7d] italic">{t}</span>
                <span className="ml-auto flex size-[13px] items-center justify-center bg-[#f2f2f2]"><I n="mem" c="size-[12px]" /></span>
              </div>
            ))}
            {["iSDA_MGRS", "drain_THLD_100"].map((t) => (
              <div key={t} className="flex h-[15.380px] items-center pl-[6px]">
                <Right />
                <span className="ml-[8px]"><Check /></span>
                <span className="ml-[3px]"><I n="raster" c="size-[13px]" /></span>
                <span className="ml-[3px] pt-px font-bold tracking-[.3px] text-[#7d7d7d] italic">{t}</span>
              </div>
            ))}
            {["drain_THLD_100.tif.vat", "iSDA_MGRS.tif.vat"].map((t) => (
              <div key={t} className="flex h-[15.380px] items-center pl-[18px]">
                <I n="tbl" c="size-[15px]" />
                <span className="ml-[2px] pt-px font-bold tracking-[-0.050px] text-black">{t}</span>
              </div>
            ))}
            <div className="flex h-[15.380px] items-center pl-[6px]">
              <Right />
              <span className="ml-[8px]"><Check /></span>
              <span className="ml-[3px]"><I n="dataGrp" c="size-[13px]" /></span>
              <span className="ml-[3px] pt-px">Data</span>
            </div>
          </div>
        </aside>
        <main className="ml-[4px] w-[1106px] shrink-0 border-x border-[#cfcfcf] bg-white">
          <MapView />
        </main>
        <aside className="ml-[4px] flex w-[162px] shrink-0 flex-col">
          <DockTitle t="Processing Toolbox" />
          <div className="flex h-[16px] items-center pb-[2px]">
            <Group c="ml-[3px]" cell="w-[13.500px]" size="size-[11px]" items="model python clock doc" />
            <Group c="ml-[3px]" cell="w-[19.500px]" size="size-[11px]" items="editTool wrench" />
          </div>
          <div className="flex h-[17px] items-center border border-[#c5c5c5] bg-white pr-[4px] pl-[5px]">
            <I n="search" c="size-[12px]" />
            <span className="ml-[4px] pt-px">dbscan</span>
            <span className="ml-auto"><I n="clear" c="size-[12px]" /></span>
          </div>
          <div className="h-[287px] border border-t-0 border-[#cdcdcd] bg-white pt-px">
            <div className="flex h-[15.400px] items-center pl-[7px]"><Right /><span className="ml-[8px]"><I n="clock" c="size-[15px]" /></span><span className="ml-[1.500px] pt-px">Recently used</span></div>
            <div className="flex h-[15.400px] items-center pl-[5px]"><Down /><span className="ml-[7px]"><I n="qgis" /></span><span className="ml-[2px] pt-px">Vector analysis</span></div>
            <div className="flex h-[15.400px] items-center bg-[#f0f0f0] pl-[37px]"><I n="gear" /><span className="ml-[2px] pt-px">DBSCAN clustering</span></div>
          </div>
          <DockTitle t="Identify Results" c="mt-[5px]" />
          <div className="flex h-[15px] items-center pb-px">
            <Group c="ml-[3px]" cell="w-[13.500px]" size="size-[11px]" items="tipGray" />
            <Group c="ml-[6.500px]" cell="w-[13.500px]" size="size-[11px]" items="expand collapse expandNew" />
            <Group c="ml-[6px]" cell="w-[13.500px]" size="size-[11px]" items="desel" />
            <Group c="ml-[5px]" cell="w-[13.500px]" size="size-[11px]" items="copy print" />
            <Group c="ml-[6.500px]" cell="w-[13.500px]" size="size-[11px]" items="identify v wrenchDk" />
          </div>
          <div className="flex h-[18px] shrink-0 items-center border border-[#cdcdcd] bg-linear-to-b from-white to-[#f0f0f0]">
            <span className="h-full w-[88px] border-r border-[#d5d5d5] pl-px leading-[17px]">Feature</span>
            <span className="pl-[2px]">Value</span>
          </div>
          <div className="flex-1 border-x border-[#cdcdcd] bg-white" />
          <div className="flex h-[13px] shrink-0 items-center border border-[#cdcdcd] bg-white px-[4px]">
            <span className="flex rotate-180"><Right /></span>
            <span className="ml-auto h-full w-[13px] bg-[#dcdcdc]" />
            <span className="ml-[3px]"><Right /></span>
          </div>
          <div className="mt-[2px] flex h-[17px] shrink-0 items-center pl-[2px] text-[9.500px]">
            <span className="w-[26px] pt-[2px]">Mode</span>
            <span className="flex h-[17px] flex-1 items-center justify-between border border-[#d0d0d0] bg-[#fafafa] pt-px pr-[6px] pl-px">Current Layer<Down /></span>
          </div>
          <div className="flex h-[15px] shrink-0 items-center pl-[2px] text-[9.500px]">
            <span className="w-[24px] pt-px">View</span>
            <span className="flex h-[14px] w-[51px] items-center justify-between border border-[#d0d0d0] bg-[#fafafa] pt-px pr-[6px] pl-px">Tree<Down /></span>
            <span className="ml-auto flex h-[14px] items-center border border-[#d5d5d5] px-[4px] pt-px">Help</span>
          </div>
        </aside>
      </div>

      <footer className="flex h-[20px] shrink-0 items-center border-t border-[#dedede] pl-[2px] text-[9.500px] tracking-[-0.35px]">
        <div className="flex h-[16px] w-[173px] items-center border border-[#cfcfcf] bg-[#f6f6f6] pl-[5px] text-[#777]">
          <I n="search" c="size-[12px]" />
          <span className="ml-[3px] tracking-[-0.05px]">Type to locate (Ctrl+K)</span>
        </div>
        <span className="ml-[756.500px] w-[47px] shrink-0">Coordinate</span>
        <span className="flex h-[16px] w-[68px] shrink-0 items-center border border-[#e2e2e2] bg-[#fafafa] pl-px">662910,605923</span>
        <span className="ml-[3px] w-[19px] shrink-0"><I n="extents" /></span>
        <span className="w-[24px] shrink-0">Scale</span>
        <span className="flex h-[16px] w-[62px] shrink-0 items-center justify-between border border-[#e2e2e2] bg-[#fafafa] pr-[6px] tracking-[-0.2px]">1:185054<Down c="text-[#888]" /></span>
        <span className="ml-[4px] w-[16px] shrink-0"><I n="lock" c="size-[13px]" /></span>
        <span className="w-[41px] shrink-0">Magnifier</span>
        <span className="flex h-[16px] w-[56px] shrink-0 items-center border border-[#e2e2e2] bg-[#fafafa] tracking-[-0.1px]">100%<Spin /></span>
        <span className="ml-[4px] w-[39px] shrink-0">Rotation</span>
        <span className="flex h-[16px] w-[49px] shrink-0 items-center border border-[#e2e2e2] bg-[#fafafa] pl-px tracking-[0px]">0.0 °<Spin /></span>
        <span className="ml-[2px] shrink-0"><Check on /></span>
        <span className="ml-[5px] w-[36px] shrink-0">Render</span>
        <I n="globeGray" c="size-[11px]" />
        <span className="w-[68px] shrink-0 tracking-[-0.2px]">EPSG:32630</span>
        <I n="bubble" c="size-[12px]" />
      </footer>

      <div className="absolute top-0 right-0 flex h-[25px] w-[109px] items-center justify-between bg-black pr-[14px] pl-[14px] text-white">
        <span className="h-px w-[9px] bg-white" />
        <svg viewBox="0 0 9 9" className="size-[9px]" fill="none" stroke="currentColor"><path d="M.5 2.500h6v6h-6zM2.500 2.500v-2h6v6h-2" /></svg>
        <svg viewBox="0 0 9 9" className="size-[9px]" fill="none" stroke="currentColor"><path d="M.5.5l8 8M8.500.5l-8 8" /></svg>
      </div>
      <div className="absolute inset-x-0 bottom-0 h-[107px] bg-[linear-gradient(to_bottom,rgba(0,0,0,0)_0px,rgba(0,0,0,.02)_20px,rgba(0,0,0,.09)_31px,rgba(0,0,0,.2)_41px,rgba(0,0,0,.35)_51px,rgba(0,0,0,.47)_60px,rgba(0,0,0,.54)_69px,rgba(0,0,0,.58)_80px,rgba(0,0,0,.6)_107px)]" />
      <div className="absolute bottom-[13px] left-[20px] font-['Liberation_Sans',sans-serif] text-[20px] leading-[24px] tracking-normal text-white">
        IDU part 1 - Delineation a boundary between urban and rural
      </div>
      <svg viewBox="0 0 200 200" className="absolute top-[309px] left-[658px] size-[200px]">
        <circle cx="100" cy="100" r="100" fill="#ed8b00" />
        <path d="M60 40v120l110-60z" fill="#fff" />
      </svg>
    </div>
  );
}
